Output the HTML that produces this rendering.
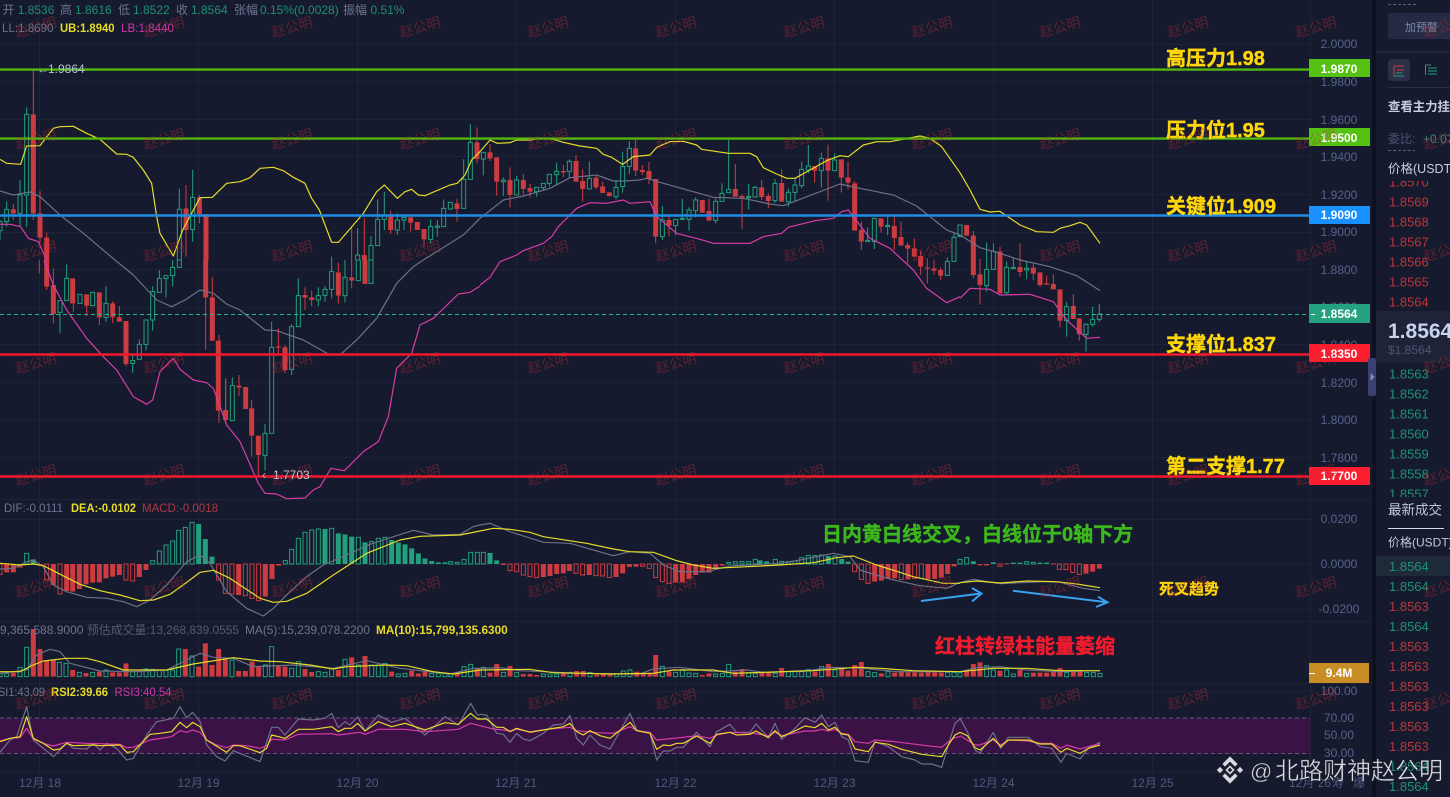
<!DOCTYPE html>
<html lang="zh">
<head>
<meta charset="utf-8">
<title>K线图</title>
<style>
html,body{margin:0;padding:0;background:#161a2e;width:1450px;height:797px;overflow:hidden}
svg{display:block;font-family:"Liberation Sans","Noto Sans CJK SC",sans-serif}
.rw,.gw{fill:none;stroke-width:3}
.rw{stroke:#d03c40}.gw{stroke:#22a07e}
.rf,.gf{fill:none;stroke-width:15}
.rf{stroke:#cc3b3f}.gf{stroke:#22a07e}
.rh,.gh{fill:#161a2e;stroke-width:3}
.rh{stroke:#cc3b3f}.gh{stroke:#22a07e}
polyline{fill:none;stroke-width:3.6;stroke-linejoin:round}
.y{stroke:#e6dc28}.w{stroke:#6d7188}.p{stroke:#d93ca8}
.t{font-size:12px}
.ax{font-size:12px;fill:#56648a;text-anchor:middle}
.tag{font-size:12px;font-weight:bold;fill:#fff;text-anchor:middle}
.big{font-size:20px;font-weight:bold;fill:#ffd60a;stroke:#ffd60a;stroke-width:.4}
.tm{font-size:12px;fill:#4c5a80;text-anchor:middle}
.pr{font-size:13px}
.re{fill:#b8363c}.gr{fill:#1f9274}
.wm{font-size:14px;fill:rgba(195,45,50,.4);text-anchor:middle;font-family:"Noto Sans CJK SC",sans-serif}
</style>
</head>
<body>
<svg width="1450" height="797" viewBox="0 0 1450 797" xmlns="http://www.w3.org/2000/svg">
<defs>
<clipPath id="c1"><rect x="1376" y="181" width="74" height="130"/></clipPath>
<clipPath id="c2"><rect x="1376" y="363" width="74" height="134"/></clipPath>
<clipPath id="c3"><rect x="0" y="0" width="1309" height="797"/></clipPath>
</defs>
<rect width="1450" height="797" fill="#161a2e"/>

<!-- grid -->
<path fill="none" stroke="#1f2338" stroke-width="1" d="M0 44.5H1310M0 81.5H1310M0 119.5H1310M0 156.5H1310M0 194.5H1310M0 232.5H1310M0 269.5H1310M0 307.5H1310M0 344.5H1310M0 382.5H1310M0 419.5H1310M0 457.5H1310M0 499.5H1372M0 519.5H1310M0 564.5H1310M0 609.5H1310M0 621.5H1372M0 683.5H1372M0 691.5H1310M0 772.5H1372M39.5 0V772M198.5 0V772M357.5 0V772M516.5 0V772M675.5 0V772M834.5 0V772M993.5 0V772M1152.5 0V772M1310.5 0V772"/>

<!-- RSI band -->
<rect x="0" y="718" width="1310" height="36" fill="#3a1245"/>
<path fill="none" stroke="#5a5e72" stroke-width="1" stroke-dasharray="4 3" d="M0 718H1310M0 753.5H1310"/>

<g clip-path="url(#c3)">
<!-- candles zoom 1 -->
<g transform="scale(.33333)">
<path class="gw" d="M0 660V720M20 604V680M60 540V680M80 322V680M538 566V780M578 510V725M995 770V780M1073 685V780M1113 708V780M1133 598V737M1153 575V690M1192 640V705M1212 645V690M1292 658V730M1312 660V710M1331 598V680M1391 478V625M1411 372V538"/>
<path class="rw" d="M40 612V660M100 210V660M120 573V730M140 698V780M558 555V770M598 585V670M618 642V780M1055 680V780M1093 655V780M1172 632V702M1232 652V695M1272 687V740M1371 597V665M1431 382V490"/>
<path class="gh" d="M-6 665h12V692h-12zM14 628h12V665h-12zM54 585h12V640h-12zM74 343h12V585h-12zM532 628h12V780h-12zM572 592h12V688h-12zM1067 765h12V780h-12zM1107 737h12V780h-12zM1127 658h12V737h-12zM1147 645h12V658h-12zM1186 660h12V690h-12zM1206 652h12V660h-12zM1286 680h12V718h-12zM1306 678h12V682h-12zM1325 625h12V680h-12zM1345 607h12V627h-12zM1385 538h12V625h-12zM1405 427h12V538h-12z"/>
<path class="rf" d="M40 628V640M100 343V640M120 640V713M140 713V780M558 625V690M598 592V642M618 642V780M1093 765V780M1172 650V690M1232 652V668M1252 666V690M1272 687V718M1371 610V627M1431 427V477"/>
</g>
<!-- candles zoom 5 -->
<g transform="translate(0,260) scale(.33333)">
<path class="gw" d="M180 122V220M200 13V122M318 78V185M398 280V338M418 238V298M438 180V272M458 78V212M478 30V97M498 47V112M518 0V80M538 0V22M677 355V480M697 352V482M795 492V632M815 185V520M875 192V345M895 55V200M955 82V138M975 78V125M995 0V115M1035 0V127M1075 0V62M1113 0V70"/>
<path class="rw" d="M118 0V40M140 0V90M160 25V190M220 55V155M260 103V168M298 97V195M338 124V190M358 138V185M378 183V318M617 0V270M637 52V242M657 225V488M677 355V490M717 345V408M737 381V447M755 420V590M775 527V650M835 205V280M855 255V340M915 82V150M935 92V138M1015 8V130M1055 0V85M1095 0V72"/>
<path class="gh" d="M174 122h12V157h-12zM194 55h12V122h-12zM234 103h12V130h-12zM272 97h12V137h-12zM312 130h12V172h-12zM392 302h12V310h-12zM412 253h12V298h-12zM432 180h12V253h-12zM452 95h12V180h-12zM472 55h12V97h-12zM492 47h12V55h-12zM512 22h12V47h-12zM532 0h12V22h-12zM691 377h12V482h-12zM789 520h12V586h-12zM809 262h12V520h-12zM869 200h12V328h-12zM889 107h12V200h-12zM949 107h12V120h-12zM969 88h12V106h-12zM989 35h12V88h-12zM1029 52h12V107h-12zM1069 0h12V62h-12zM1107 0h12V70h-12z"/>
<path class="rf" d="M140 0V80M160 75V162M218 55V130M260 103V137M298 97V172M338 130V172M358 172V185M378 183V312M617 0V112M637 112V242M655 242V452M677 450V480M717 377V383M737 381V447M755 445V527M775 527V585M835 259V263M855 262V330M915 105V113M935 112V120M1015 37V107M1055 52V62M1095 0V72"/>
</g>
<!-- candles zoom 2 -->
<g transform="translate(480,100) scale(.33333)">
<path class="gw" d="M10 157V226M70 232V288M110 228V285M170 262V290M190 250V270M208 223V260M230 188V255M268 178V235M328 185V267M408 240V298M428 155V278M448 123V222M547 318V420M587 358V405M607 297V358M627 322V392M647 292V352M707 295V370M726 250V304M746 120V278M806 252V328M825 257V291M885 237V308M925 265V320M945 235V305M965 185V265M985 135V220M1024 158V262M1064 160V212M1163 382V425M1183 355V447M1223 350V405M1402 472V526M1422 398V484M1440 377V410"/>
<path class="rw" d="M30 132V183M50 172V287M90 202V322M130 222V283M150 252V292M250 195V232M288 165V245M308 208V305M348 228V268M368 245V279M388 277V290M467 120V228M487 195V225M507 186V252M527 237V430M567 350V408M667 300V338M687 295V362M766 192V290M786 283V386M845 240V300M865 280V325M905 208V305M1004 198V248M1044 134V302M1084 178V278M1104 185V268M1124 243V392M1144 365V450M1203 355V398M1243 350V450M1263 365V437M1283 427V490M1303 415V470M1322 452V525M1342 475V550M1362 480V525M1382 502V540"/>
<path class="gh" d="M4 157h12V177h-12zM64 240h12V245h-12zM104 240h12V285h-12zM164 262h12V275h-12zM184 250h12V263h-12zM202 223h12V250h-12zM224 214h12V224h-12zM262 184h12V214h-12zM322 235h12V267h-12zM402 262h12V290h-12zM422 199h12V260h-12zM442 145h12V199h-12zM541 360h12V410h-12zM581 358h12V377h-12zM601 355h12V358h-12zM621 330h12V358h-12zM641 300h12V332h-12zM701 304h12V361h-12zM720 280h12V304h-12zM740 268h12V278h-12zM800 289h12V293h-12zM819 262h12V291h-12zM879 250h12V302h-12zM919 277h12V305h-12zM939 255h12V277h-12zM959 208h12V257h-12zM979 198h12V210h-12zM1018 175h12V212h-12zM1058 180h12V212h-12zM1157 421h12V425h-12zM1177 355h12V425h-12zM1217 376h12V380h-12zM1396 484h12V526h-12zM1416 412h12V484h-12zM1434 377h12V410h-12z"/>
<path class="rf" d="M30 157V175M50 172V245M90 240V285M130 240V267M150 264V275M250 213V217M288 183V245M308 243V267M348 233V262M368 259V279M388 277V288M467 145V212M487 210V216M507 213V237M527 237V410M567 360V377M667 300V338M687 333V362M766 267V290M786 288V293M845 262V291M865 288V303M905 249V305M1004 198V212M1044 175V212M1084 178V233M1104 232V248M1124 250V392M1144 390V425M1203 355V380M1243 378V414M1263 411V437M1283 435V446M1303 445V470M1322 468V500M1342 502V506M1362 505V512M1382 510V527"/>
</g>
<!-- candles zoom 3 -->
<g transform="translate(960,130) scale(.33333)">
<path class="gw" d="M0 285V317M80 338V485M100 340V418M140 395V495M160 382V416M200 395V448M320 516V620M378 580V665M398 530V590M418 522V575"/>
<path class="rw" d="M20 285V317M40 303V445M60 387V523M120 350V490M180 340V440M220 400V450M240 427V470M260 437V464M280 433V478M300 478V592M340 492V567M358 565V632"/>
<path class="gh" d="M-6 285h12V317h-12zM74 418h12V467h-12zM94 364h12V418h-12zM134 412h12V488h-12zM154 412h12V416h-12zM194 415h12V420h-12zM314 530h12V572h-12zM372 583h12V613h-12zM392 568h12V583h-12zM412 552h12V568h-12z"/>
<path class="rf" d="M20 285V317M40 317V435M60 433V465M120 364V490M180 411V426M220 413V431M240 427V465M260 460V464M280 462V478M300 478V572M340 528V567M358 565V613"/>
</g>

<!-- BOLL -->
<g transform="scale(.33333)">
<polyline class="y" points="0,478 20,490 62,493 80,438 120,437 160,385 180,380 220,379 260,400 300,418 350,462 380,463 400,472 430,510 455,550 470,650 480,700 520,768 548,690 600,593 637,592 680,550 720,545 750,533 780,505 820,502 850,512 880,532 915,550 935,595 958,630 995,727 1015,727 1090,640 1130,575 1153,555 1192,595 1215,575 1235,568 1255,585 1275,587 1350,555 1372,550 1395,525 1415,480 1440,455"/>
<polyline class="w" points="0,573 40,585 90,576 120,590 180,645 250,700 345,780"/>
<polyline class="p" points="0,673 30,673 62,680 85,715 115,725 140,780"/>
<polyline class="w" points="1270,780 1390,705 1440,655"/>
</g>
<g transform="translate(0,260) scale(.33333)">
<polyline class="w" points="345,0 400,45 470,120 515,140 555,120 600,90 640,100 680,132 720,150 795,210 830,212 910,240 990,285 1020,285 1075,235 1130,175 1190,70 1240,20 1270,0"/>
<polyline class="p" points="132,0 160,75 200,150 260,235 310,290 350,330 400,410 440,433 458,420 480,335 520,295 540,328 580,360 620,368 640,385 680,495 720,545 775,670 795,700 830,702 860,716 915,714 940,690 960,680 993,625 1033,632 1090,575 1135,545 1165,470 1190,325 1235,280 1260,195 1300,175 1375,102 1410,97 1440,78"/>
</g>
<g transform="translate(480,100) scale(.33333)">
<polyline class="y" points="0,155 30,120 52,130 90,128 110,120 150,120 180,115 220,118 250,127 300,138 350,145 370,163 395,172 428,193 460,170 510,165 530,142 570,125 610,124 650,135 665,148 745,160 810,160 830,170 850,203 890,222 920,235 945,235 990,210 1040,182 1080,167 1105,170 1150,135 1190,125 1230,125 1320,108 1350,115 1385,140 1440,218"/>
<polyline class="w" points="0,355 70,300 130,288 210,265 270,233 350,225 400,243 430,243 480,240 500,235 550,250 700,292 790,295 870,312 910,317 960,298 1080,252 1140,265 1240,285 1310,318 1400,390 1440,405"/>
<polyline class="p" points="0,555 30,532 60,485 110,465 130,452 190,430 215,410 235,380 290,325 330,308 380,310 430,300 450,310 510,305 530,350 590,400 660,418 700,430 810,430 850,410 905,400 925,382 1005,362 1060,355 1085,335 1105,330 1170,415 1230,445 1300,510 1340,565 1400,608 1440,590"/>
</g>
<g transform="translate(960,130) scale(.33333)">
<polyline class="y" points="0,128 30,180 60,238 90,246 120,244 180,285 230,305 280,307 300,295 330,287 360,277 380,285 420,340"/>
<polyline class="w" points="0,315 60,353 120,370 180,390 270,410 350,437 420,482"/>
<polyline class="p" points="0,505 30,475 90,478 120,495 210,493 280,515 320,570 380,625 420,622"/>
</g>

<!-- MACD / VOL / RSI zoom 6 -->
<g transform="translate(0,495) scale(.33333)">
<path class="gh" d="M74 175h12V207h-12zM452 197h12V207h-12zM472 168h12V207h-12zM492 150h12V207h-12zM512 138h12V207h-12zM530 106h12V207h-12zM550 97h12V207h-12zM570 82h12V207h-12zM850 197h12V207h-12zM869 163h12V207h-12zM889 130h12V207h-12zM909 112h12V207h-12zM929 105h12V207h-12zM949 102h12V207h-12zM989 100h12V207h-12zM1069 127h12V207h-12zM1109 140h12V207h-12zM1129 130h12V207h-12zM1149 127h12V207h-12zM1346 200h12V207h-12zM1366 202h12V207h-12zM1386 193h12V207h-12zM1406 172h12V207h-12zM1426 172h12V207h-12z"/>
<path class="rh" d="M-6 207h12V238h-12zM134 207h12V255h-12zM174 207h12V297h-12zM372 207h12V255h-12zM392 207h12V258h-12zM650 207h12V255h-12zM670 207h12V295h-12zM690 207h12V297h-12zM730 207h12V302h-12zM750 207h12V310h-12zM770 207h12V317h-12z"/>
<path class="gf" d="M100 193V207M596 87V207M616 132V207M636 185V207M975 102V207M1015 115V207M1035 118V207M1055 125V207M1095 142V207M1175 135V207M1195 143V207M1215 148V207M1235 160V207M1255 175V207M1275 190V207M1295 198V207M1315 202V207M1335 202V207"/>
<path class="rf" d="M20 207V232M40 207V232M60 207V218M120 207V212M160 207V270M200 207V288M218 207V290M238 207V282M258 207V268M278 207V263M298 207V262M318 207V250M338 207V245M358 207V240M418 207V246M438 207V225M716 207V300M796 207V305M816 207V252M836 207V212"/>
<polyline class="w" points="0,222 40,220 80,200 100,195 130,215 160,270 200,290 260,307 320,310 370,320 410,335 450,315 500,270 560,200 600,180 630,205 680,290 740,340 790,363 820,340 870,290 920,245 970,210 1040,180 1110,148 1180,125 1240,106 1300,120 1380,118 1420,95 1440,90"/>
<polyline class="y" points="0,205 60,210 100,207 130,212 240,268 300,287 360,300 420,317 460,315 510,298 560,262 600,232 640,226 690,250 780,310 820,322 860,319 920,295 1000,240 1100,175 1200,135 1260,124 1380,120 1440,108"/>
<path class="gh" d="M-6 535h12V545h-12zM14 535h12V545h-12zM54 517h12V545h-12zM74 457h12V545h-12zM172 502h12V545h-12zM192 505h12V545h-12zM232 532h12V545h-12zM272 532h12V545h-12zM312 525h12V545h-12zM392 530h12V545h-12zM412 530h12V545h-12zM432 522h12V545h-12zM452 523h12V545h-12zM472 525h12V545h-12zM492 525h12V545h-12zM512 525h12V545h-12zM530 462h12V545h-12zM570 483h12V545h-12zM690 495h12V545h-12zM790 510h12V545h-12zM809 455h12V545h-12zM869 520h12V545h-12zM889 500h12V545h-12zM949 530h12V545h-12zM969 532h12V545h-12zM989 520h12V545h-12zM1029 493h12V545h-12zM1069 510h12V545h-12zM1109 510h12V545h-12zM1129 510h12V545h-12zM1149 505h12V545h-12zM1189 537h12V545h-12zM1209 535h12V545h-12zM1289 535h12V545h-12zM1309 535h12V545h-12zM1329 535h12V545h-12zM1346 537h12V545h-12zM1386 515h12V545h-12zM1406 508h12V545h-12z"/>
<path class="rf" d="M40 533V545M100 402V545M120 462V545M140 498V545M160 495V545M218 525V545M258 534V545M298 530V545M338 532V545M358 532V545M378 505V545M556 462V545M596 515V545M616 445V545M636 510V545M656 462V545M676 490V545M716 528V545M736 528V545M756 500V545M776 515V545M835 513V545M855 515V545M915 522V545M935 531V545M1015 525V545M1055 487V545M1095 483V545M1175 530V545M1235 527V545M1255 535V545M1275 527V545M1372 535V545M1432 520V545"/>
<polyline class="w" points="0,535 80,525 110,480 150,463 180,470 210,505 300,528 400,530 500,525 600,475 640,487 700,490 760,515 880,510 1000,520 1100,497 1200,520 1350,537 1420,520 1440,520"/>
<polyline class="y" points="0,530 60,530 100,510 130,498 200,490 260,490 300,500 370,525 500,525 580,507 700,488 780,498 840,500 930,510 1000,522 1040,515 1160,510 1220,512 1300,530 1360,537 1440,525"/>
<polyline class="w" points="0,772 30,735 50,725 80,635 100,735 130,760 160,785 200,745 220,760 260,762 280,745 300,765 320,745 350,760 380,795 400,790 440,720 470,680 520,670 540,635 560,668 578,652 600,680 620,750 650,785 675,798 700,767 780,800 815,697 835,697 855,720 895,672 940,675 975,670 995,655 1015,698 1035,680 1050,690 1073,665 1095,708 1135,660 1175,682 1215,670 1275,720 1335,665 1375,690 1412,625 1432,660 1440,660"/>
<polyline class="p" points="0,738 30,730 60,728 80,700 100,732 130,745 160,753 200,742 260,745 360,748 380,758 400,757 450,735 515,725 540,707 560,712 578,705 600,712 620,735 650,750 680,758 700,750 740,752 780,760 800,752 815,733 855,735 895,718 995,716 1015,720 1080,712 1095,718 1135,703 1215,703 1275,710 1375,703 1412,685 1440,692"/>
<polyline class="y" points="0,740 30,730 60,725 80,665 100,730 130,745 160,765 180,762 200,745 220,752 280,750 300,752 360,750 380,772 400,770 450,718 480,715 515,710 540,682 560,698 578,682 600,695 620,735 680,772 700,752 720,752 780,773 800,760 815,720 855,730 895,703 940,703 995,695 1015,710 1035,700 1055,700 1073,685 1095,708 1135,680 1175,695 1215,685 1275,705 1335,683 1375,688 1412,655 1432,672 1440,672"/>
</g>

<!-- zoom 7 -->
<g transform="translate(480,495) scale(.33333)">
<path class="gh" d="M4 172h12V207h-12zM740 202h12V207h-12zM760 200h12V207h-12zM780 200h12V207h-12zM800 200h12V207h-12zM820 193h12V207h-12zM880 193h12V207h-12zM899 199h12V207h-12zM919 200h12V207h-12zM939 198h12V207h-12zM959 188h12V207h-12zM979 182h12V207h-12zM999 182h12V207h-12zM1019 180h12V207h-12zM1059 183h12V207h-12zM1434 197h12V207h-12z"/>
<path class="rh" d="M84 207h12V227h-12zM104 207h12V230h-12zM124 207h12V240h-12zM144 207h12V245h-12zM164 207h12V248h-12zM282 207h12V235h-12zM302 207h12V240h-12zM342 207h12V242h-12zM362 207h12V243h-12zM382 207h12V248h-12zM482 207h12V214h-12zM502 207h12V220h-12zM521 207h12V248h-12zM541 207h12V260h-12zM561 207h12V265h-12zM1118 207h12V230h-12zM1138 207h12V253h-12zM1158 207h12V265h-12zM1258 207h12V253h-12zM1298 207h12V250h-12zM1318 207h12V250h-12z"/>
<path class="gf" d="M30 174V207M50 196V207M840 196V207M860 199V207M1045 183V207M1085 192V207M1104 200V207"/>
<path class="rf" d="M70 205V210M190 207V246M210 207V243M230 207V237M250 207V235M268 207V228M328 207V240M408 207V246M428 207V235M448 207V216M468 207V215M587 207V263M607 207V262M627 207V252M647 207V240M667 207V233M687 207V233M707 207V222M727 207V212M1184 207V260M1204 207V257M1224 207V250M1244 207V250M1284 207V253M1344 207V252M1364 207V252M1384 207V248M1403 207V237M1422 207V214"/>
<polyline class="w" points="0,90 30,85 90,110 190,142 270,145 400,182 450,170 510,175 550,210 600,230 680,230 750,213 900,205 960,195 1060,175 1110,185 1140,225 1220,250 1320,272 1400,280 1440,262"/>
<polyline class="y" points="0,108 40,100 90,103 150,112 190,125 320,145 400,162 450,170 520,172 590,197 640,210 700,220 800,215 900,210 1000,203 1070,188 1120,183 1190,210 1300,245 1390,265 1440,265"/>
<path class="gh" d="M4 517h12V545h-12zM64 532h12V545h-12zM104 533h12V545h-12zM184 537h12V545h-12zM204 537h12V545h-12zM224 537h12V545h-12zM264 532h12V545h-12zM324 533h12V545h-12zM404 537h12V545h-12zM424 528h12V545h-12zM444 525h12V545h-12zM541 514h12V545h-12zM581 532h12V545h-12zM601 524h12V545h-12zM621 534h12V545h-12zM641 535h12V545h-12zM701 537h12V545h-12zM721 535h12V545h-12zM740 508h12V545h-12zM800 533h12V545h-12zM820 535h12V545h-12zM880 535h12V545h-12zM919 530h12V545h-12zM939 530h12V545h-12zM959 530h12V545h-12zM979 524h12V545h-12zM1019 515h12V545h-12zM1059 525h12V545h-12zM1158 530h12V545h-12zM1178 533h12V545h-12zM1218 530h12V545h-12zM1397 532h12V545h-12zM1416 532h12V545h-12zM1434 532h12V545h-12z"/>
<path class="rf" d="M30 533V545M50 507V545M90 513V545M130 537V545M150 537V545M170 540V545M250 534V545M290 528V545M310 528V545M350 539V545M370 537V545M390 539V545M470 530V545M490 533V545M510 533V545M527 480V545M567 530V545M667 540V545M687 535V545M766 530V545M786 522V545M846 532V545M866 532V545M905 519V545M1005 530V545M1045 507V545M1085 520V545M1104 527V545M1124 510V545M1144 501V545M1204 535V545M1244 533V545M1264 530V545M1284 532V545M1304 532V545M1324 533V545M1344 527V545M1364 532V545M1384 533V545"/>
<polyline class="w" points="0,520 60,518 120,527 300,535 480,537 520,522 600,517 700,530 800,525 860,533 1000,525 1050,517 1150,520 1250,530 1440,530"/>
<polyline class="y" points="0,525 150,523 220,533 400,537 520,535 580,525 700,525 760,535 1000,527 1130,517 1200,520 1300,527 1440,530"/>
<polyline class="w" points="0,658 20,660 50,715 70,718 90,742 110,715 130,732 150,737 190,715 220,690 250,687 270,662 290,730 310,750 330,720 360,750 390,762 450,655 470,705 510,715 530,795 550,768 570,768 590,757 610,757 650,712 690,755 710,710 750,688 770,712 810,712 828,687 865,728 885,685 905,733 940,705 975,668 1005,682 1025,660 1045,695 1065,682 1085,725 1105,735 1125,797 1165,802 1185,740 1225,755 1265,785 1305,795 1325,807 1355,807 1385,817 1405,750 1425,685 1440,672"/>
<polyline class="p" points="0,692 40,702 70,705 90,708 110,703 150,710 200,703 270,697 290,707 350,713 400,715 450,695 470,707 510,712 530,735 600,728 650,722 690,730 710,720 750,712 820,715 865,722 885,712 905,722 975,708 1005,708 1025,703 1045,708 1065,703 1085,715 1105,718 1125,740 1165,745 1185,735 1245,740 1340,752 1385,757 1405,740 1425,728 1440,725"/>
<polyline class="y" points="0,672 20,672 50,697 70,697 90,710 110,700 150,712 190,705 250,695 270,685 290,710 310,720 330,707 360,722 390,730 450,682 470,707 510,715 530,763 550,750 570,752 590,745 610,745 650,723 690,745 710,718 750,712 770,720 810,718 828,708 865,728 885,707 905,725 940,710 975,693 1005,698 1025,685 1045,705 1065,697 1085,717 1105,720 1125,762 1165,770 1185,742 1225,748 1265,763 1325,778 1385,785 1405,750 1425,720 1440,712"/>
</g>

<!-- zoom 8 -->
<g transform="translate(960,495) scale(.33333)">
<path class="gh" d="M-6 193h12V207h-12zM14 188h12V207h-12zM194 200h12V207h-12zM214 202h12V207h-12zM-6 533h12V545h-12zM74 512h12V545h-12zM94 525h12V545h-12zM134 525h12V545h-12zM154 537h12V545h-12zM194 535h12V545h-12zM314 533h12V545h-12zM374 533h12V545h-12zM394 533h12V545h-12zM414 535h12V545h-12z"/>
<path class="rh" d="M114 207h12V214h-12zM292 207h12V223h-12zM312 207h12V224h-12zM332 207h12V232h-12zM352 207h12V238h-12z"/>
<path class="gf" d="M40 199V207M100 202V207M160 203V207M180 203V207M240 203V207M260 203V207"/>
<path class="rf" d="M60 207V211M80 207V211M140 205V208M280 205V208M378 207V236M398 207V230M418 207V221M20 525V545M40 507V545M60 502V545M120 527V545M180 525V545M220 533V545M240 533V545M260 533V545M280 530V545M300 519V545M340 530V545M360 525V545"/>
<polyline class="w" points="0,263 40,253 120,266 250,260 300,262 370,280 420,287"/>
<polyline class="y" points="0,263 50,258 120,264 200,258 290,260 350,267 420,278"/>
<polyline class="w" points="0,530 50,518 120,515 200,525 300,530 420,527"/>
<polyline class="y" points="0,530 100,520 200,520 300,527 420,527"/>
<polyline class="w" points="0,670 22,710 45,765 60,775 100,712 122,760 145,727 165,727 205,727 240,755 275,760 303,802 320,775 360,792 385,760 420,742"/>
<polyline class="p" points="0,722 45,750 60,750 100,735 122,750 145,735 205,738 240,745 275,745 303,760 320,750 360,762 385,755 420,745"/>
<polyline class="y" points="0,712 22,722 45,758 60,765 100,730 122,755 145,735 205,735 240,747 275,747 303,772 320,760 360,775 385,760 420,750"/>
</g>

<!-- level lines -->
<path fill="none" stroke="#2ab58a" stroke-width="1" stroke-dasharray="4 3" d="M0 314.5H1309"/>
<path fill="none" stroke="#52b80e" stroke-width="2.4" d="M0 69.6H1309M0 138.6H1309"/>
<path fill="none" stroke="#1f8ce6" stroke-width="2.4" d="M0 215.5H1309"/>
<path fill="none" stroke="#f5182c" stroke-width="2.4" d="M0 354.5H1309M0 476.5H1309"/>
</g>

<!-- blue arrows -->
<path fill="none" stroke="#39a2f0" stroke-width="2" d="M921 601L981 593.5M972 588L981.5 593.5L972 601.5M1013 590.7L1107 602.3M1098 596.7L1107.5 602.3L1096 607"/>

<!-- chart labels -->
<g class="t">
<text y="14" fill="#6b7590"><tspan x="2.5">开</tspan><tspan x="60">高</tspan><tspan x="118">低</tspan><tspan x="176">收</tspan><tspan x="234">张幅</tspan><tspan x="343">振幅</tspan></text>
<text y="14" fill="#1f8f72"><tspan x="17.7">1.8536</tspan><tspan x="75">1.8616</tspan><tspan x="133">1.8522</tspan><tspan x="191">1.8564</tspan><tspan x="260">0.15%(0.0028)</tspan><tspan x="370.5">0.51%</tspan></text>
<text x="2" y="32" fill="#6b7590" textLength="51.5" lengthAdjust="spacingAndGlyphs">LL:1.8690</text>
<text x="60" y="32" fill="#e6dc28" font-weight="bold" textLength="54.5" lengthAdjust="spacingAndGlyphs">UB:1.8940</text>
<text x="121" y="32" fill="#d035a8" textLength="53" lengthAdjust="spacingAndGlyphs">LB:1.8440</text>
<text x="37" y="73" fill="#a8b4cc">←</text><text x="48" y="73" fill="#b5c0d8">1.9864</text>
<text x="262" y="479" fill="#a8b4cc">‹</text><text x="273" y="479" fill="#c2cce0">1.7703</text>
<text x="4" y="512" fill="#6b7590" textLength="59" lengthAdjust="spacingAndGlyphs">DIF:-0.0111</text>
<text x="71" y="512" fill="#e6dc28" font-weight="bold" textLength="65" lengthAdjust="spacingAndGlyphs">DEA:-0.0102</text>
<text x="142" y="512" fill="#a83a40" textLength="76" lengthAdjust="spacingAndGlyphs">MACD:-0.0018</text>
<text x="0" y="634" fill="#6b7590">9,365,588.9000</text>
<text x="87" y="634" fill="#565b70" textLength="152" lengthAdjust="spacingAndGlyphs">预估成交量:13,268,839.0555</text>
<text x="245" y="634" fill="#6b7590" textLength="125" lengthAdjust="spacingAndGlyphs">MA(5):15,239,078.2200</text>
<text x="376" y="634" fill="#e6dc28" font-weight="bold" textLength="131.7" lengthAdjust="spacingAndGlyphs">MA(10):15,799,135.6300</text>
<text x="-10" y="696" fill="#6b7590" textLength="55" lengthAdjust="spacingAndGlyphs">RSI1:43.09</text>
<text x="51" y="696" fill="#e6dc28" font-weight="bold" textLength="57" lengthAdjust="spacingAndGlyphs">RSI2:39.66</text>
<text x="114.5" y="696" fill="#d035a8" textLength="57" lengthAdjust="spacingAndGlyphs">RSI3:40.54</text>
</g>

<!-- axis -->
<text class="ax" x="1339" y="48">2.0000</text><text class="ax" x="1339" y="86">1.9800</text><text class="ax" x="1339" y="124">1.9600</text><text class="ax" x="1339" y="161">1.9400</text><text class="ax" x="1339" y="199">1.9200</text><text class="ax" x="1339" y="236">1.9000</text><text class="ax" x="1339" y="274">1.8800</text><text class="ax" x="1339" y="311">1.8600</text><text class="ax" x="1339" y="349">1.8400</text><text class="ax" x="1339" y="387">1.8200</text><text class="ax" x="1339" y="424">1.8000</text><text class="ax" x="1339" y="462">1.7800</text>
<text class="ax" x="1339" y="523">0.0200</text><text class="ax" x="1339" y="568">0.0000</text><text class="ax" x="1339" y="613">-0.0200</text>
<text class="ax" x="1339" y="695">100.00</text><text class="ax" x="1339" y="722">70.00</text><text class="ax" x="1339" y="739">50.00</text><text class="ax" x="1339" y="757">30.00</text>

<!-- tags -->
<rect x="1309" y="59" width="61" height="18" fill="#55c113"/><text class="tag" x="1339" y="73">1.9870</text>
<rect x="1309" y="128" width="61" height="18" fill="#55c113"/><text class="tag" x="1339" y="142">1.9500</text>
<rect x="1309" y="206" width="61" height="18" fill="#1890ff"/><text class="tag" x="1339" y="219">1.9090</text>
<rect x="1309" y="304" width="61" height="19" fill="#26a17f"/><text class="tag" x="1339" y="318">1.8564</text><path d="M1311 314.5H1315" stroke="#fff" stroke-width="1"/>
<rect x="1309" y="344" width="61" height="18" fill="#fa1e2f"/><text class="tag" x="1339" y="358">1.8350</text>
<rect x="1309" y="467" width="61" height="18" fill="#fa1e2f"/><text class="tag" x="1339" y="480">1.7700</text>
<rect x="1309" y="663" width="60" height="20" fill="#c98d25"/><text class="tag" x="1339" y="677">9.4M</text><path d="M1309 673.5H1315" stroke="#fff" stroke-width="1"/>

<!-- time -->
<text class="tm" x="40" y="787">12月 18</text><text class="tm" x="198.5" y="787">12月 19</text><text class="tm" x="357.5" y="787">12月 20</text><text class="tm" x="516" y="787">12月 21</text><text class="tm" x="675.5" y="787">12月 22</text><text class="tm" x="834.5" y="787">12月 23</text><text class="tm" x="993.5" y="787">12月 24</text><text class="tm" x="1152.5" y="787">12月 25</text><text class="tm" x="1310" y="787">12月 26</text><text class="tm" x="1338" y="787">寿</text><text class="tm" x="1359" y="787">爆</text>

<!-- right panel -->
<rect x="1372" y="0" width="4" height="797" fill="#0e1120"/>
<rect x="1376" y="0" width="74" height="797" fill="#161a2e"/>
<path d="M1388 4.5H1418M1388 150.5H1415" stroke="#566088" stroke-dasharray="3 2" fill="none"/>
<rect x="1388" y="13" width="70" height="26" rx="3" fill="#252b45"/>
<text x="1405" y="31" font-size="11" fill="#7d8aad">加预警</text>
<path d="M1376 52H1450M1388 87.5H1450" stroke="#2a2e44" fill="none"/>
<rect x="1388" y="59" width="22" height="22" rx="4" fill="#2a3048"/>
<path d="M1394 66V76M1394 66H1404M1397 70H1404" stroke="#d03c40" fill="none"/>
<path d="M1394 76H1404M1396 73H1402" stroke="#22a07e" fill="none"/>
<path d="M1425.5 65V75M1425.5 65H1431" stroke="#6b7590" fill="none"/>
<path d="M1428 68H1437M1428 71H1437M1428 74H1437" stroke="#22a07e" fill="none"/>
<text x="1388" y="111" font-size="12.4" fill="#c5cde0" font-weight="bold">查看主力挂单</text>
<text x="1388" y="143" font-size="12" fill="#4c5675">委比:</text>
<text x="1423" y="143" font-size="12" fill="#1f9274">+0.07</text>
<text x="1388" y="173" font-size="12.5" fill="#c5cde0">价格(USDT)</text>
<g clip-path="url(#c1)" class="pr">
<text class="re" x="1389" y="186.5">1.8570</text><text class="re" x="1389" y="206.5">1.8569</text><text class="re" x="1389" y="226.5">1.8568</text><text class="re" x="1389" y="246.5">1.8567</text><text class="re" x="1389" y="266.5">1.8566</text><text class="re" x="1389" y="286.5">1.8565</text><text class="re" x="1389" y="306.5">1.8564</text>
</g>
<rect x="1376" y="311" width="74" height="52" fill="#1e2337"/>
<text x="1388" y="338" font-size="21" font-weight="bold" fill="#c8d4f0">1.8564</text>
<text x="1388" y="354" font-size="12" fill="#4c5675">$1.8564</text>
<g clip-path="url(#c2)" class="pr">
<text class="gr" x="1389" y="378.5">1.8563</text><text class="gr" x="1389" y="398.5">1.8562</text><text class="gr" x="1389" y="418.5">1.8561</text><text class="gr" x="1389" y="438.5">1.8560</text><text class="gr" x="1389" y="458.5">1.8559</text><text class="gr" x="1389" y="478.5">1.8558</text><text class="gr" x="1389" y="498.5">1.8557</text>
</g>
<rect x="1368" y="358" width="8" height="38" rx="2" fill="#3a4170"/>
<path d="M1370.5 373L1374.5 377L1370.5 381Z" fill="#8590b0"/>
<text x="1388" y="514.5" font-size="13.5" fill="#c0c8dc">最新成交</text>
<path d="M1388 528.5H1444" stroke="#d5d9e6" fill="none"/>
<text x="1388" y="546.5" font-size="12" fill="#c0c8dc">价格(USDT)</text>
<rect x="1376" y="556" width="74" height="20" fill="#1e2a3a"/>
<g class="pr">
<text class="gr" x="1389" y="571">1.8564</text><text class="gr" x="1389" y="591">1.8564</text><text class="re" x="1389" y="611">1.8563</text><text class="gr" x="1389" y="631">1.8564</text><text class="re" x="1389" y="651">1.8563</text><text class="re" x="1389" y="671">1.8563</text><text class="re" x="1389" y="691">1.8563</text><text class="re" x="1389" y="711">1.8563</text><text class="re" x="1389" y="731">1.8563</text><text class="re" x="1389" y="751">1.8563</text><text class="gr" x="1389" y="771">1.8564</text><text class="gr" x="1389" y="791">1.8564</text>
</g>

<!-- big annotations -->
<text class="big" x="1166" y="65">高压力1.98</text>
<text class="big" x="1166" y="137">压力位1.95</text>
<text class="big" x="1166" y="213">关键位1.909</text>
<text class="big" x="1166" y="351">支撑位1.837</text>
<text class="big" x="1166" y="473">第二支撑1.77</text>
<text x="822" y="541" font-size="20" font-weight="bold" fill="#3cb81c" stroke="#3cb81c" stroke-width=".4">日内黄白线交叉，白线位于0轴下方</text>
<text x="935" y="653" font-size="20" font-weight="bold" fill="#f01c2e" stroke="#f01c2e" stroke-width=".4">红柱转绿柱能量萎缩</text>
<text x="1159" y="594" font-size="15" font-weight="bold" fill="#ffd60a" stroke="#ffd60a" stroke-width=".3">死叉趋势</text>

<!-- watermarks -->
<g class="wm">
<text x="36" y="32" transform="rotate(-15 36 27)">赵公明</text><text x="164" y="32" transform="rotate(-15 164 27)">赵公明</text><text x="292" y="32" transform="rotate(-15 292 27)">赵公明</text><text x="420" y="32" transform="rotate(-15 420 27)">赵公明</text><text x="548" y="32" transform="rotate(-15 548 27)">赵公明</text><text x="676" y="32" transform="rotate(-15 676 27)">赵公明</text><text x="804" y="32" transform="rotate(-15 804 27)">赵公明</text><text x="932" y="32" transform="rotate(-15 932 27)">赵公明</text><text x="1060" y="32" transform="rotate(-15 1060 27)">赵公明</text><text x="1188" y="32" transform="rotate(-15 1188 27)">赵公明</text><text x="1316" y="32" transform="rotate(-15 1316 27)">赵公明</text><text x="1444" y="32" transform="rotate(-15 1444 27)">赵公明</text>
<text x="36" y="144" transform="rotate(-15 36 139)">赵公明</text><text x="164" y="144" transform="rotate(-15 164 139)">赵公明</text><text x="292" y="144" transform="rotate(-15 292 139)">赵公明</text><text x="420" y="144" transform="rotate(-15 420 139)">赵公明</text><text x="548" y="144" transform="rotate(-15 548 139)">赵公明</text><text x="676" y="144" transform="rotate(-15 676 139)">赵公明</text><text x="804" y="144" transform="rotate(-15 804 139)">赵公明</text><text x="932" y="144" transform="rotate(-15 932 139)">赵公明</text><text x="1060" y="144" transform="rotate(-15 1060 139)">赵公明</text><text x="1188" y="144" transform="rotate(-15 1188 139)">赵公明</text><text x="1316" y="144" transform="rotate(-15 1316 139)">赵公明</text><text x="1444" y="144" transform="rotate(-15 1444 139)">赵公明</text>
<text x="36" y="256" transform="rotate(-15 36 251)">赵公明</text><text x="164" y="256" transform="rotate(-15 164 251)">赵公明</text><text x="292" y="256" transform="rotate(-15 292 251)">赵公明</text><text x="420" y="256" transform="rotate(-15 420 251)">赵公明</text><text x="548" y="256" transform="rotate(-15 548 251)">赵公明</text><text x="676" y="256" transform="rotate(-15 676 251)">赵公明</text><text x="804" y="256" transform="rotate(-15 804 251)">赵公明</text><text x="932" y="256" transform="rotate(-15 932 251)">赵公明</text><text x="1060" y="256" transform="rotate(-15 1060 251)">赵公明</text><text x="1188" y="256" transform="rotate(-15 1188 251)">赵公明</text><text x="1316" y="256" transform="rotate(-15 1316 251)">赵公明</text><text x="1444" y="256" transform="rotate(-15 1444 251)">赵公明</text>
<text x="36" y="368" transform="rotate(-15 36 363)">赵公明</text><text x="164" y="368" transform="rotate(-15 164 363)">赵公明</text><text x="292" y="368" transform="rotate(-15 292 363)">赵公明</text><text x="420" y="368" transform="rotate(-15 420 363)">赵公明</text><text x="548" y="368" transform="rotate(-15 548 363)">赵公明</text><text x="676" y="368" transform="rotate(-15 676 363)">赵公明</text><text x="804" y="368" transform="rotate(-15 804 363)">赵公明</text><text x="932" y="368" transform="rotate(-15 932 363)">赵公明</text><text x="1060" y="368" transform="rotate(-15 1060 363)">赵公明</text><text x="1188" y="368" transform="rotate(-15 1188 363)">赵公明</text><text x="1316" y="368" transform="rotate(-15 1316 363)">赵公明</text><text x="1444" y="368" transform="rotate(-15 1444 363)">赵公明</text>
<text x="36" y="480" transform="rotate(-15 36 475)">赵公明</text><text x="164" y="480" transform="rotate(-15 164 475)">赵公明</text><text x="292" y="480" transform="rotate(-15 292 475)">赵公明</text><text x="420" y="480" transform="rotate(-15 420 475)">赵公明</text><text x="548" y="480" transform="rotate(-15 548 475)">赵公明</text><text x="676" y="480" transform="rotate(-15 676 475)">赵公明</text><text x="804" y="480" transform="rotate(-15 804 475)">赵公明</text><text x="932" y="480" transform="rotate(-15 932 475)">赵公明</text><text x="1060" y="480" transform="rotate(-15 1060 475)">赵公明</text><text x="1188" y="480" transform="rotate(-15 1188 475)">赵公明</text><text x="1316" y="480" transform="rotate(-15 1316 475)">赵公明</text><text x="1444" y="480" transform="rotate(-15 1444 475)">赵公明</text>
<text x="36" y="592" transform="rotate(-15 36 587)">赵公明</text><text x="164" y="592" transform="rotate(-15 164 587)">赵公明</text><text x="292" y="592" transform="rotate(-15 292 587)">赵公明</text><text x="420" y="592" transform="rotate(-15 420 587)">赵公明</text><text x="548" y="592" transform="rotate(-15 548 587)">赵公明</text><text x="676" y="592" transform="rotate(-15 676 587)">赵公明</text><text x="804" y="592" transform="rotate(-15 804 587)">赵公明</text><text x="932" y="592" transform="rotate(-15 932 587)">赵公明</text><text x="1060" y="592" transform="rotate(-15 1060 587)">赵公明</text><text x="1188" y="592" transform="rotate(-15 1188 587)">赵公明</text><text x="1316" y="592" transform="rotate(-15 1316 587)">赵公明</text><text x="1444" y="592" transform="rotate(-15 1444 587)">赵公明</text>
<text x="36" y="704" transform="rotate(-15 36 699)">赵公明</text><text x="164" y="704" transform="rotate(-15 164 699)">赵公明</text><text x="292" y="704" transform="rotate(-15 292 699)">赵公明</text><text x="420" y="704" transform="rotate(-15 420 699)">赵公明</text><text x="548" y="704" transform="rotate(-15 548 699)">赵公明</text><text x="676" y="704" transform="rotate(-15 676 699)">赵公明</text><text x="804" y="704" transform="rotate(-15 804 699)">赵公明</text><text x="932" y="704" transform="rotate(-15 932 699)">赵公明</text><text x="1060" y="704" transform="rotate(-15 1060 699)">赵公明</text><text x="1188" y="704" transform="rotate(-15 1188 699)">赵公明</text><text x="1316" y="704" transform="rotate(-15 1316 699)">赵公明</text><text x="1444" y="704" transform="rotate(-15 1444 699)">赵公明</text>
</g>

<!-- square-feed mark -->
<g fill="#d9dbe0" stroke="#2a2d3a" stroke-width=".6">
<path d="M1230 756L1238 764L1235 767L1230 762L1225 767L1222 764Z"/>
<path d="M1230 784L1222 776L1225 773L1230 778L1235 773L1238 776Z"/>
<path d="M1220 766.5L1223.5 770L1220 773.5L1216.5 770Z"/>
<path d="M1240 766.5L1243.5 770L1240 773.5L1236.5 770Z"/>
<path fill-rule="evenodd" d="M1230 765L1235 770L1230 775L1225 770ZM1230 768L1228 770L1230 772L1232 770Z"/>
</g>
<text x="1250" y="779" font-size="22" fill="#d9dbe0" stroke="#20222e" stroke-width=".4">@</text>
<text x="1275" y="779" font-size="24" fill="#d9dbe0" stroke="#20222e" stroke-width=".4">北路财神赵公明</text>
</svg>
</body>
</html>
